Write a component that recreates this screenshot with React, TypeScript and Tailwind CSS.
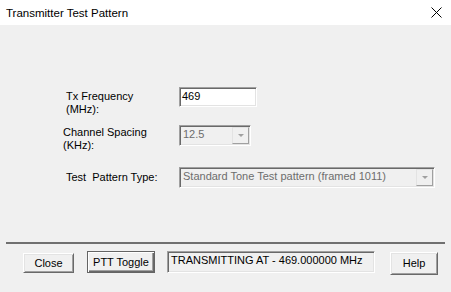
import React from "react";

const font = { fontFamily: '"Liberation Sans", Arial, sans-serif' };

function Combo({ w, value }: { w: string; value: string }) {
  return (
    <div
      className={`${w} h-[21px] flex items-stretch bg-[#f0f0f0] border border-t-[#a0a0a0] border-l-[#a0a0a0] border-r-white border-b-white shadow-[inset_1px_1px_0_#696969,inset_-1px_-1px_0_#e3e3e3]`}
    >
      <div className="flex-1 pl-[3px] pt-[2px] text-[11px] leading-[13px] text-[#6d6d6d] whitespace-nowrap overflow-hidden">
        {value}
      </div>
      <div className="w-[17px] my-[1px] mr-[1px] flex items-center justify-center bg-[#f0f0f0] border border-t-[#e3e3e3] border-l-[#e3e3e3] border-r-[#a0a0a0] border-b-[#a0a0a0]">
        <div className="w-0 h-0 border-l-[3px] border-r-[3px] border-t-[3px] border-l-transparent border-r-transparent border-t-[#a0a0a0]" />
      </div>
    </div>
  );
}

function Btn({ label, cls, def }: { label: string; cls: string; def?: boolean }) {
  return (
    <div
      className={`${cls} flex items-center justify-center text-[11px] leading-[13px] text-black bg-[#f0f0f0] ${
        def
          ? "border border-[#646464] shadow-[inset_1px_1px_0_#ffffff,inset_-1px_-1px_0_#696969,inset_-2px_-2px_0_#a0a0a0]"
          : "border border-t-white border-l-white border-r-[#696969] border-b-[#696969] shadow-[inset_1px_1px_0_#e3e3e3,inset_-1px_-1px_0_#a0a0a0]"
      }`}
    >
      {label}
    </div>
  );
}

export default function App() {
  return (
    <div className="w-[451px] h-[292px] bg-[#f0f0f0] flex flex-col overflow-hidden" style={font}>
      <div className="h-[25px] bg-white flex items-center justify-between pl-[6px] pr-[8px]">
        <span className="text-[11.5px] text-black leading-[14px]">Transmitter Test Pattern</span>
        <svg width="11" height="11" viewBox="0 0 11 11" className="mr-[1px]">
          <path d="M0.5 0.5 L10.5 10.5 M10.5 0.5 L0.5 10.5" stroke="#000" strokeWidth="1" />
        </svg>
      </div>

      <div className="flex flex-col pt-[62px]">
        <div className="flex h-[38px] pl-[66px]">
          <div className="w-[113px] mt-[3px] text-[11px] leading-[13px] text-black">
            Tx Frequency
            <br />
            (MHz):
          </div>
          <div className="w-[78px] h-[20px] bg-white border border-t-[#a0a0a0] border-l-[#a0a0a0] border-r-white border-b-white shadow-[inset_1px_1px_0_#696969,inset_-1px_-1px_0_#e3e3e3] pl-[2px] pt-[2px] text-[11px] leading-[13px] text-black">
            469
          </div>
        </div>

        <div className="flex h-[42px] pl-[63px]">
          <div className="w-[116px] mt-[1px] text-[11px] leading-[13px] text-black">
            Channel Spacing
            <br />
            (KHz):
          </div>
          <Combo w="w-[72px]" value="12.5" />
        </div>

        <div className="flex h-[21px] pl-[66px]">
          <div className="w-[113px] mt-[4px] text-[11px] leading-[13px] text-black whitespace-pre">
            Test  Pattern Type:
          </div>
          <Combo w="w-[256px]" value="Standard Tone Test pattern (framed 1011)" />
        </div>

        <div className="mt-[54px] mx-[6px] h-[2px] bg-[#707070]" />

        <div className="flex items-start mt-[7px]">
          <Btn label="Close" cls="ml-[23px] mt-[2px] w-[51px] h-[20px]" />
          <Btn label="PTT Toggle" cls="ml-[13px] w-[68px] h-[22px]" def />
          <div className="ml-[12px] w-[208px] h-[22px] border border-t-[#a0a0a0] border-l-[#a0a0a0] border-r-white border-b-white shadow-[inset_1px_1px_0_#696969,inset_-1px_-1px_0_#e3e3e3] pl-[3px] pt-[2px] text-[11px] leading-[13px] text-black whitespace-nowrap">
            TRANSMITTING AT - 469.000000 MHz
          </div>
          <Btn label="Help" cls="ml-[15px] mt-[1px] w-[48px] h-[23px]" />
        </div>
      </div>
    </div>
  );
}
